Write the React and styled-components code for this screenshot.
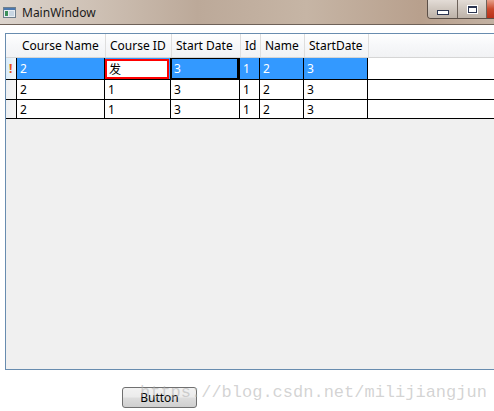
import React from "react";
import styled, { createGlobalStyle } from "styled-components";

const GlobalStyle = createGlobalStyle`
  body {
    margin: 0;
    background: #ffffff;
    font-family: "Noto Sans", "Noto Sans CJK SC", sans-serif;
  }
`;

const Page = styled.div`
  position: relative;
  width: 494px;
  height: 411px;
  overflow: hidden;
  background: #ffffff;
`;

const TitleBar = styled.div`
  display: flex;
  align-items: flex-start;
  height: 24px;
  border-bottom: 1px solid #6e6158;
  background: linear-gradient(
    90deg,
    #dcd4cd 0%,
    #cfc2b6 18%,
    #bca999 40%,
    #c6b5a5 62%,
    #b8a08d 85%,
    #c3b1a2 100%
  );
`;

const AppIcon = styled.svg`
  width: 13px;
  height: 11px;
  margin: 7px 0 0 3px;
`;

const Title = styled.span`
  margin: 4px 0 0 6px;
  font-size: 12px;
  color: #1b1b1b;
`;

const Controls = styled.div`
  display: flex;
  margin-left: auto;
  margin-right: -37px;
  height: 18px;
  border: 1px solid #5b4f47;
  border-top: none;
  border-radius: 0 0 4px 4px;
  overflow: hidden;
`;

const CtrlButton = styled.div`
  display: flex;
  align-items: center;
  justify-content: center;
  width: ${(p) => p.$w}px;
  height: 18px;
  border-left: ${(p) => (p.$first ? "none" : "1px solid #6d625a")};
  background: ${(p) =>
    p.$close
      ? "linear-gradient(#e7a08b, #c9492c 50%, #b8301a)"
      : "linear-gradient(#e3dcd6, #cfc6be 50%, #bdb2a8)"};
`;

const MinGlyph = styled.div`
  width: 10px;
  height: 3px;
  margin-top: 6px;
  border: 1px solid #2c3550;
  background: #ffffff;
`;

const MaxGlyph = styled.div`
  width: 7px;
  height: 4px;
  border: 1px solid #2c3550;
  border-top-width: 2px;
  background: #ffffff;
  box-shadow: 0 0 0 1px #ffffff;
`;

const Client = styled.div`
  padding: 8px 0 0 5px;
`;

const Grid = styled.div`
  display: flex;
  flex-direction: column;
  width: 500px;
  height: 335px;
  border: 1px solid #688caf;
  background: #f0f0f0;
`;

const HeaderRow = styled.div`
  display: flex;
  height: 23px;
  border-bottom: 1px solid #d5d5d5;
  background: linear-gradient(#ffffff 0%, #f7f8fa 45%, #f1f2f4 100%);
`;

const Corner = styled.div`
  width: 12px;
  flex: none;
`;

const HeaderCell = styled.div`
  display: flex;
  align-items: center;
  width: ${(p) => p.$w}px;
  flex: none;
  box-sizing: border-box;
  padding-left: 4px;
  border-right: 1px solid #dedede;
  font-size: 12px;
  color: #000000;
  white-space: nowrap;
`;

const DataRow = styled.div`
  display: flex;
  height: ${(p) => p.$h}px;
  box-sizing: border-box;
  border-bottom: 1px solid #000000;
  background: #ffffff;
`;

const RowHeader = styled.div`
  display: flex;
  align-items: center;
  width: 11px;
  flex: none;
  box-sizing: border-box;
  padding-left: 3px;
  border-right: 1px solid #000000;
  background: ${(p) =>
    p.$selected
      ? "linear-gradient(90deg, #d8ecfa, #f4f6f8)"
      : "linear-gradient(90deg, #eef0f2, #f7f7f7)"};
  color: #e8500c;
  font-size: 12px;
  font-weight: bold;
`;

const Cell = styled.div`
  display: flex;
  align-items: center;
  width: ${(p) => p.$w}px;
  flex: none;
  box-sizing: border-box;
  padding-left: 3px;
  border-right: 1px solid #000000;
  background: ${(p) => (p.$selected ? "#3399ff" : "#ffffff")};
  color: ${(p) => (p.$selected ? "#ffffff" : "#000000")};
  font-size: 12px;
  white-space: nowrap;
  ${(p) => p.$focus && "box-shadow: inset 0 0 0 1px #000000; border-right-width: 2px;"}
`;

const EditCell = styled.div`
  display: flex;
  align-items: center;
  width: ${(p) => p.$w}px;
  flex: none;
  box-sizing: border-box;
  border-right: 1px solid #000000;
  background: #3399ff;
  padding: 1px 1px 0 0;
`;

const EditBox = styled.div`
  flex: 1;
  height: 100%;
  box-sizing: border-box;
  display: flex;
  align-items: center;
  padding-left: 2px;
  border: 2px solid #ff0000;
  background: #ffffff;
  color: #000000;
  font-size: 12px;
`;

const Filler = styled.div`
  flex: 1;
  background: #ffffff;
`;

const Footer = styled.div`
  display: flex;
  padding: 17px 0 0 117px;
`;

const PushButton = styled.button`
  width: 75px;
  height: 21px;
  padding: 0;
  border: 1px solid #707070;
  border-radius: 3px;
  background: linear-gradient(#f2f2f2 0%, #ebebeb 48%, #dddddd 52%, #cfcfcf 100%);
  font-family: "Noto Sans", sans-serif;
  font-size: 12px;
  color: #000000;
`;

const Watermark = styled.div`
  position: absolute;
  left: 140px;
  top: 383px;
  font-family: "Liberation Mono", monospace;
  font-size: 17px;
  color: rgba(175, 175, 175, 0.55);
  pointer-events: none;
  white-space: nowrap;
`;

const columns = [
  { name: "Course Name", w: 88 },
  { name: "Course ID", w: 66 },
  { name: "Start Date", w: 69 },
  { name: "Id", w: 20 },
  { name: "Name", w: 44 },
  { name: "StartDate", w: 64 },
];

const rows = [
  { values: ["2", "发", "3", "1", "2", "3"], h: 22, selected: true },
  { values: ["2", "1", "3", "1", "2", "3"], h: 20 },
  { values: ["2", "1", "3", "1", "2", "3"], h: 19 },
];

const App = () => {
  return (
    <Page>
      <GlobalStyle />
      <TitleBar>
        <AppIcon viewBox="0 0 13 11">
          <rect x="0.5" y="0.5" width="12" height="10" fill="#e9eef2" stroke="#6f7f8c" />
          <rect x="1" y="1" width="11" height="2" fill="#4b78b0" />
          <rect x="2" y="4" width="3" height="5" fill="#3c8f5a" />
          <rect x="6" y="4" width="5" height="5" fill="#c8d6e2" />
        </AppIcon>
        <Title>MainWindow</Title>
        <Controls>
          <CtrlButton $w={29} $first>
            <MinGlyph />
          </CtrlButton>
          <CtrlButton $w={28}>
            <MaxGlyph />
          </CtrlButton>
          <CtrlButton $w={43} $close />
        </Controls>
      </TitleBar>
      <Client>
        <Grid>
          <HeaderRow>
            <Corner />
            {columns.map((c) => (
              <HeaderCell key={c.name} $w={c.w}>
                {c.name}
              </HeaderCell>
            ))}
          </HeaderRow>
          {rows.map((r, ri) => (
            <DataRow key={ri} $h={r.h}>
              <RowHeader $selected={r.selected}>{r.selected ? "!" : ""}</RowHeader>
              {r.values.map((v, ci) =>
                r.selected && ci === 1 ? (
                  <EditCell key={ci} $w={columns[ci].w}>
                    <EditBox>{v}</EditBox>
                  </EditCell>
                ) : (
                  <Cell
                    key={ci}
                    $w={columns[ci].w}
                    $selected={r.selected}
                    $focus={r.selected && ci === 2}
                  >
                    {v}
                  </Cell>
                )
              )}
              <Filler />
            </DataRow>
          ))}
        </Grid>
        <Footer>
          <PushButton>Button</PushButton>
        </Footer>
      </Client>
      <Watermark>https://blog.csdn.net/milijiangjun</Watermark>
    </Page>
  );
};

export default App;
